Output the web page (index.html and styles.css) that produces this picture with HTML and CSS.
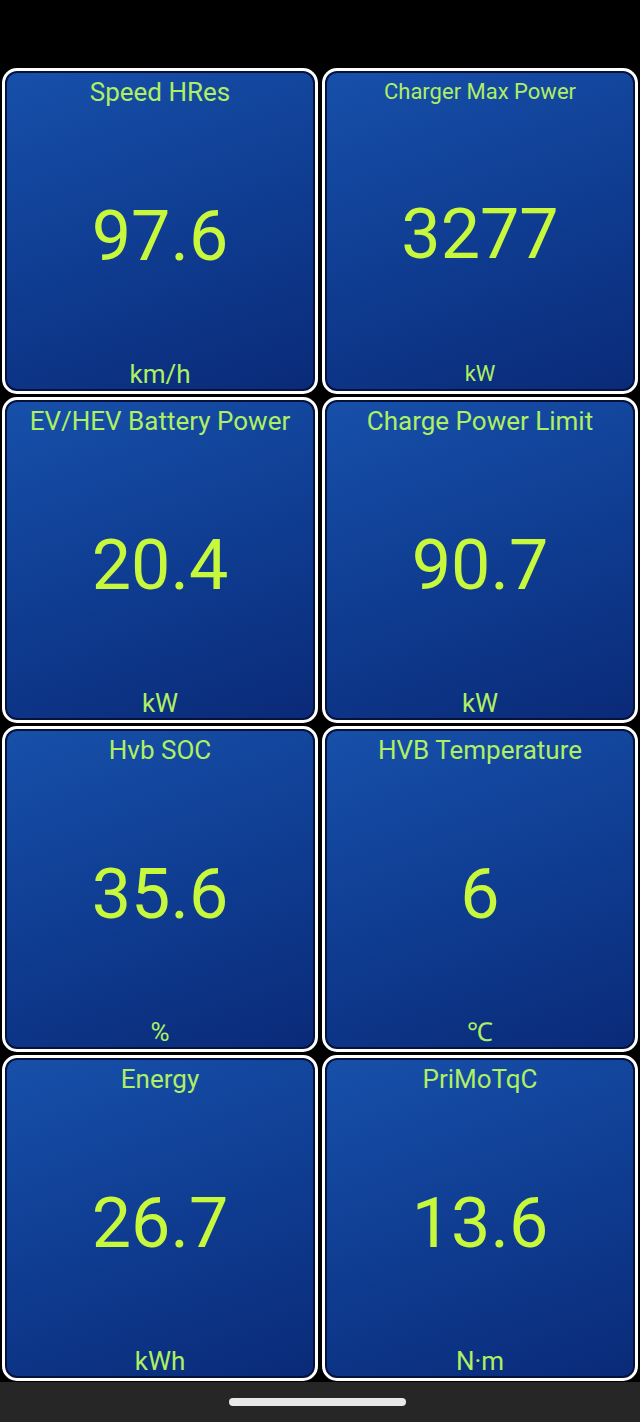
FILE: index.html
```html
<!DOCTYPE html>
<html>
<head>
  <title>Dashboard</title>
  <link rel="stylesheet" href="styles.css">
</head>
<body>
  <div class="status-bar"></div>
  <div class="grid">
    <div class="tile">
      <div class="title">Speed HRes</div>
      <div class="value">97.6</div>
      <div class="unit">km/h</div>
    </div>
    <div class="tile compact">
      <div class="title">Charger Max Power</div>
      <div class="value">3277</div>
      <div class="unit">kW</div>
    </div>
    <div class="tile">
      <div class="title">EV/HEV Battery Power</div>
      <div class="value">20.4</div>
      <div class="unit">kW</div>
    </div>
    <div class="tile">
      <div class="title">Charge Power Limit</div>
      <div class="value">90.7</div>
      <div class="unit">kW</div>
    </div>
    <div class="tile">
      <div class="title">Hvb SOC</div>
      <div class="value">35.6</div>
      <div class="unit">%</div>
    </div>
    <div class="tile">
      <div class="title">HVB Temperature</div>
      <div class="value">6</div>
      <div class="unit">℃</div>
    </div>
    <div class="tile">
      <div class="title">Energy</div>
      <div class="value">26.7</div>
      <div class="unit">kWh</div>
    </div>
    <div class="tile">
      <div class="title">PriMoTqC</div>
      <div class="value">13.6</div>
      <div class="unit">N·m</div>
    </div>
  </div>
  <div class="nav-bar">
    <div class="handle"></div>
  </div>
</body>
</html>
```

FILE: styles.css
```css
body {
  margin: 0;
  background-color: #000;
  font-family: Roboto, "Noto Sans", sans-serif;
  height: 1422px;
  display: flex;
  flex-direction: column;
}

.status-bar {
  height: 68px;
}

.grid {
  display: grid;
  grid-template-columns: 1fr 1fr;
  grid-template-rows: repeat(4, 326px);
  gap: 3px 4px;
  padding: 0 2px;
}

.tile {
  border: 3px solid #fff;
  border-radius: 15px;
  background: linear-gradient(160deg, #1750aa 0%, #0f3d92 50%, #0a2a78 100%);
  box-shadow: inset 0 0 0 2px #06123a;
  display: flex;
  flex-direction: column;
  align-items: center;
  padding: 6px 4px 2px;
  color: #aeef64;
}

.title {
  font-size: 26px;
  line-height: 30px;
}

.value {
  flex: 1;
  display: flex;
  align-items: center;
  font-size: 70px;
  color: #c8f83c;
  padding-top: 6px;
}

.unit {
  font-size: 26px;
  line-height: 30px;
}

.compact .title,
.compact .unit {
  font-size: 22px;
}

.compact .unit {
  padding-top: 4px;
}

.nav-bar {
  flex: 1;
  margin-top: 1px;
  background-color: #262626;
  display: flex;
  justify-content: center;
  align-items: center;
}

.handle {
  width: 177px;
  height: 8px;
  border-radius: 4px;
  background-color: #e8e8e8;
  margin-left: -6px;
}
```
